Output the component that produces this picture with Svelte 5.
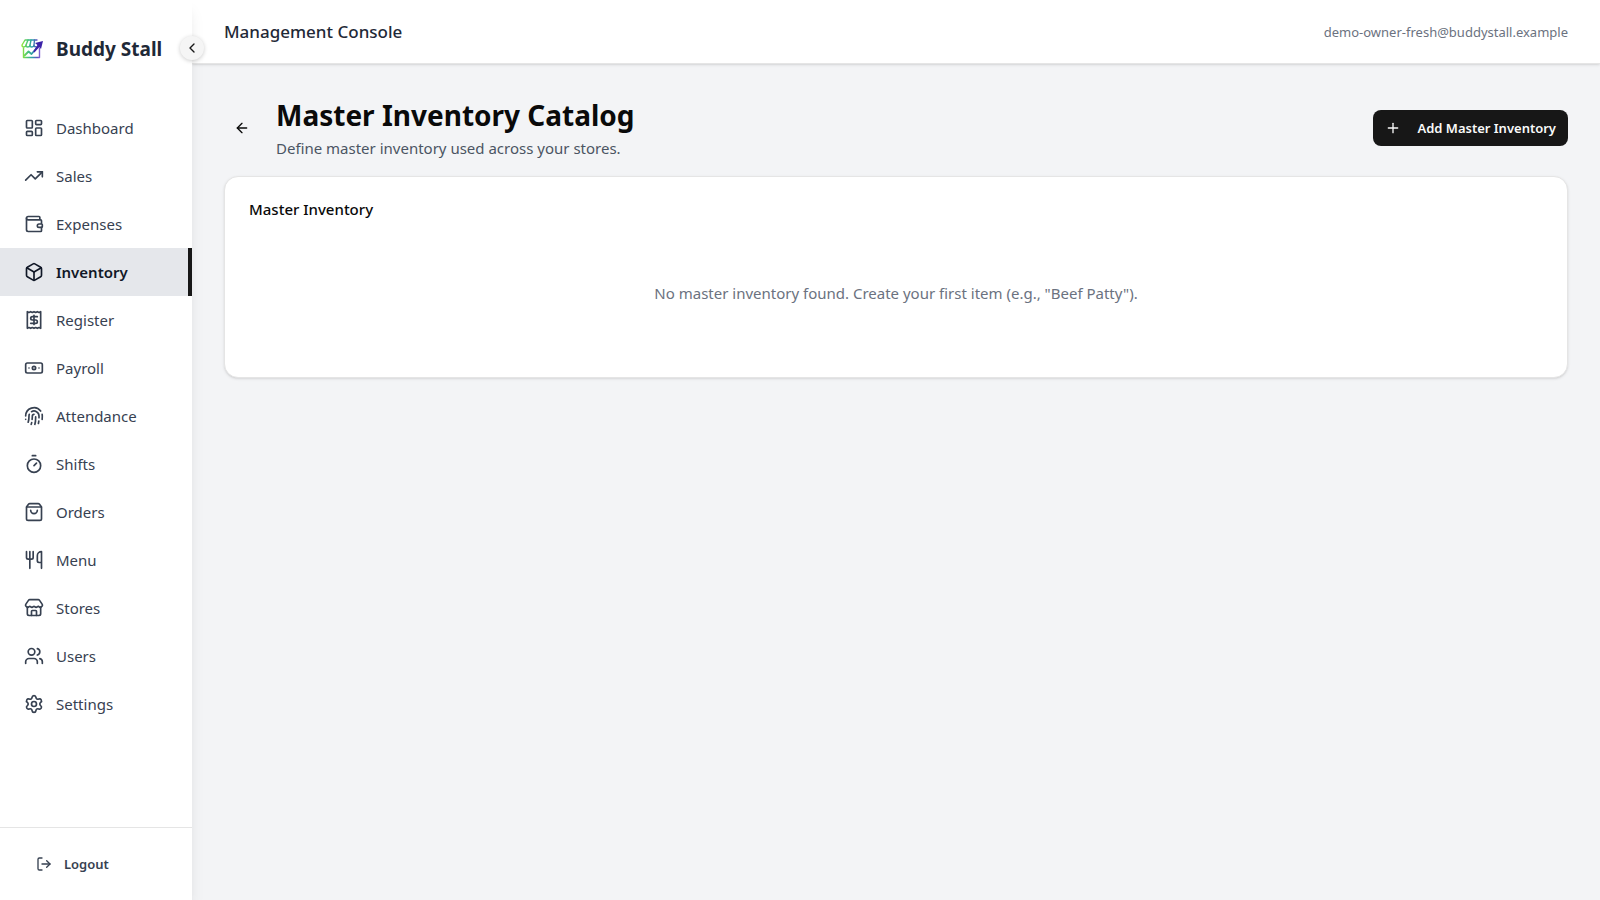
<script>
  const navItems = [
    {
      label: 'Dashboard',
      paths: [
        'M4 3h5a1 1 0 0 1 1 1v7a1 1 0 0 1-1 1H4a1 1 0 0 1-1-1V4a1 1 0 0 1 1-1z',
        'M15 3h5a1 1 0 0 1 1 1v3a1 1 0 0 1-1 1h-5a1 1 0 0 1-1-1V4a1 1 0 0 1 1-1z',
        'M15 12h5a1 1 0 0 1 1 1v7a1 1 0 0 1-1 1h-5a1 1 0 0 1-1-1v-7a1 1 0 0 1 1-1z',
        'M4 16h5a1 1 0 0 1 1 1v3a1 1 0 0 1-1 1H4a1 1 0 0 1-1-1v-3a1 1 0 0 1 1-1z'
      ]
    },
    { label: 'Sales', paths: ['M16 7h6v6', 'm22 7-8.5 8.5-5-5L2 17'] },
    {
      label: 'Expenses',
      paths: [
        'M19 7V4a1 1 0 0 0-1-1H5a2 2 0 0 0 0 4h15a1 1 0 0 1 1 1v4h-3a2 2 0 0 0 0 4h3a1 1 0 0 0 1-1v-2a1 1 0 0 0-1-1',
        'M3 5v14a2 2 0 0 0 2 2h15a1 1 0 0 0 1-1v-4'
      ]
    },
    {
      label: 'Inventory',
      paths: [
        'M21 8a2 2 0 0 0-1-1.73l-7-4a2 2 0 0 0-2 0l-7 4A2 2 0 0 0 3 8v8a2 2 0 0 0 1 1.73l7 4a2 2 0 0 0 2 0l7-4A2 2 0 0 0 21 16Z',
        'm3.3 7 8.7 5 8.7-5',
        'M12 22V12'
      ]
    },
    {
      label: 'Register',
      paths: [
        'M4 2v20l2-1 2 1 2-1 2 1 2-1 2 1 2-1 2 1V2l-2 1-2-1-2 1-2-1-2 1-2-1-2 1Z',
        'M16 8h-6a2 2 0 1 0 0 4h4a2 2 0 1 1 0 4H8',
        'M12 17.5v-11'
      ]
    },
    {
      label: 'Payroll',
      paths: [
        'M4 6h16a2 2 0 0 1 2 2v8a2 2 0 0 1-2 2H4a2 2 0 0 1-2-2V8a2 2 0 0 1 2-2z',
        'M14 12a2 2 0 1 1-4 0 2 2 0 0 1 4 0z',
        'M6 12h.01M18 12h.01'
      ]
    },
    {
      label: 'Attendance',
      paths: [
        'M12 10a2 2 0 0 0-2 2c0 1.02-.1 2.51-.26 4',
        'M14 13.12c0 2.38 0 6.38-1 8.88',
        'M17.29 21.02c.12-.6.43-2.3.5-3.02',
        'M2 12a10 10 0 0 1 18-6',
        'M2 16h.01',
        'M21.8 16c.2-2 .131-5.354 0-6',
        'M5 19.5C5.5 18 6 15 6 12a6 6 0 0 1 .34-2',
        'M8.65 22c.21-.66.45-1.32.57-2',
        'M9 6.8a6 6 0 0 1 9 5.2v2'
      ]
    },
    { label: 'Shifts', paths: ['M10 2h4', 'm12 14 3-3', 'M20 14a8 8 0 1 1-16 0 8 8 0 0 1 16 0z'] },
    {
      label: 'Orders',
      paths: [
        'M16 10a4 4 0 0 1-8 0',
        'M3.103 6.034h17.794',
        'M3.4 5.467a2 2 0 0 0-.4 1.2V20a2 2 0 0 0 2 2h14a2 2 0 0 0 2-2V6.667a2 2 0 0 0-.4-1.2l-2-2.667A2 2 0 0 0 17 2H7a2 2 0 0 0-1.6.8z'
      ]
    },
    {
      label: 'Menu',
      paths: [
        'M3 2v7c0 1.1.9 2 2 2h4a2 2 0 0 0 2-2V2',
        'M7 2v20',
        'M21 15V2a5 5 0 0 0-5 5v6c0 1.1.9 2 2 2h3Zm0 0v7'
      ]
    },
    {
      label: 'Stores',
      paths: [
        'M15 21v-5a1 1 0 0 0-1-1h-4a1 1 0 0 0-1 1v5',
        'M17.774 10.31a1.12 1.12 0 0 0-1.549 0 2.5 2.5 0 0 1-3.451 0 1.12 1.12 0 0 0-1.548 0 2.5 2.5 0 0 1-3.452 0 1.12 1.12 0 0 0-1.549 0 2.5 2.5 0 0 1-3.77-3.248l2.889-4.184A2 2 0 0 1 7 2h10a2 2 0 0 1 1.653.873l2.895 4.192a2.5 2.5 0 0 1-3.774 3.244',
        'M4 10.95V19a2 2 0 0 0 2 2h12a2 2 0 0 0 2-2v-8.05'
      ]
    },
    {
      label: 'Users',
      paths: [
        'M16 21v-2a4 4 0 0 0-4-4H6a4 4 0 0 0-4 4v2',
        'M16 3.128a4 4 0 0 1 0 7.744',
        'M22 21v-2a4 4 0 0 0-3-3.87',
        'M13 7a4 4 0 1 1-8 0 4 4 0 0 1 8 0z'
      ]
    },
    {
      label: 'Settings',
      paths: [
        'M9.671 4.136a2.34 2.34 0 0 1 4.659 0 2.34 2.34 0 0 0 3.319 1.915 2.34 2.34 0 0 1 2.33 4.033 2.34 2.34 0 0 0 0 3.831 2.34 2.34 0 0 1-2.33 4.033 2.34 2.34 0 0 0-3.319 1.915 2.34 2.34 0 0 1-4.659 0 2.34 2.34 0 0 0-3.32-1.915 2.34 2.34 0 0 1-2.33-4.033 2.34 2.34 0 0 0 0-3.831A2.34 2.34 0 0 1 6.35 6.051a2.34 2.34 0 0 0 3.319-1.915',
        'M15 12a3 3 0 1 1-6 0 3 3 0 0 1 6 0z'
      ]
    }
  ];

  let active = $state('Inventory');
  let collapsed = $state(false);

  function select(event, label) {
    event.preventDefault();
    active = label;
  }
</script>

{#snippet icon(paths, size)}
  <svg class="icon" width={size} height={size} viewBox="0 0 24 24" aria-hidden="true">
    {#each paths as d}
      <path {d} />
    {/each}
  </svg>
{/snippet}

<div class="layout">
  <aside class="sidebar" class:collapsed>
    <div class="brand">
      <svg class="logo" width="24" height="24" viewBox="0 0 24 24" aria-hidden="true">
        <defs>
          <linearGradient id="brand-gradient" x1="2" y1="0" x2="22" y2="0" gradientUnits="userSpaceOnUse">
            <stop offset="0" stop-color="#8fe63a" />
            <stop offset="0.25" stop-color="#4fc870" />
            <stop offset="0.5" stop-color="#2b9fa8" />
            <stop offset="0.75" stop-color="#5b4fc0" />
            <stop offset="1" stop-color="#9a6be0" />
          </linearGradient>
        </defs>
        <g
          fill="none"
          stroke="url(#brand-gradient)"
          stroke-width="1.4"
          stroke-linejoin="round"
          stroke-linecap="round"
        >
          <path d="M17 3H5L2 8c0 2.600 3.400 2.600 4 .2 0 2.400 3.700 2.400 4 0 0 2.400 3.700 2.400 4 0 .3 1.600 1.200 1.800 2 1.500" />
          <path d="M8 3 6 8M11 3l-1 5M14.500 3 14 8" />
          <path d="M3.500 11v9.500h16V11" />
          <path d="m4.500 18.500 4-4 3 2.500 6-7" stroke-width="1.800" />
        </g>
        <path d="m15 6 8-2-2 8-1.600-2-5 5.400-1-1L17.400 8z" fill="#3b22a8" />
      </svg>
      {#if !collapsed}<span>Buddy Stall</span>{/if}
    </div>

    <button
      class="toggle"
      aria-label={collapsed ? 'Expand sidebar' : 'Collapse sidebar'}
      onclick={() => (collapsed = !collapsed)}
    >
      {@render icon([collapsed ? 'm9 18 6-6-6-6' : 'm15 18-6-6 6-6'], 16)}
    </button>

    <nav>
      {#each navItems as item}
        <a
          href="#{item.label.toLowerCase()}"
          class="nav-item"
          class:active={active === item.label}
          onclick={(event) => select(event, item.label)}
        >
          {@render icon(item.paths, 20)}
          {#if !collapsed}<span>{item.label}</span>{/if}
        </a>
      {/each}
    </nav>

    <div class="sidebar-footer">
      <button class="logout">
        {@render icon(['m16 17 5-5-5-5', 'M21 12H9', 'M9 21H5a2 2 0 0 1-2-2V5a2 2 0 0 1 2-2h4'], 16)}
        {#if !collapsed}<span>Logout</span>{/if}
      </button>
    </div>
  </aside>

  <div class="content">
    <header class="topbar">
      <h2>Management Console</h2>
      <span class="email">demo-owner-fresh@buddystall.example</span>
    </header>

    <main>
      <div class="page-header">
        <button class="back" aria-label="Back">
          {@render icon(['m12 19-7-7 7-7', 'M19 12H5'], 16)}
        </button>
        <div class="page-title">
          <h1>Master Inventory Catalog</h1>
          <p>Define master inventory used across your stores.</p>
        </div>
        <button class="add">
          {@render icon(['M5 12h14', 'M12 5v14'], 16)}
          <span>Add Master Inventory</span>
        </button>
      </div>

      <section class="card">
        <h3>Master Inventory</h3>
        <p class="empty">No master inventory found. Create your first item (e.g., "Beef Patty").</p>
      </section>
    </main>
  </div>
</div>

<style>
  :global(body) {
    margin: 0;
    background: #f3f4f6;
  }

  .layout {
    display: flex;
    min-height: 100vh;
    font-family: 'Segoe UI', 'Noto Sans', 'Open Sans', sans-serif;
    font-size: 15px;
    line-height: 24px;
    color: #0a0a0a;
  }

  h1,
  h2,
  h3,
  p {
    margin: 0;
  }

  button {
    font: inherit;
    color: inherit;
    border: none;
    background: none;
    cursor: pointer;
  }

  .icon {
    flex-shrink: 0;
    fill: none;
    stroke: currentColor;
    stroke-width: 2;
    stroke-linecap: round;
    stroke-linejoin: round;
  }

  /* sidebar */
  .sidebar {
    position: sticky;
    top: 0;
    z-index: 10;
    display: flex;
    flex-direction: column;
    flex-shrink: 0;
    width: 192px;
    height: 100vh;
    background: #fff;
    box-shadow: 0 10px 15px -3px rgba(0, 0, 0, 0.1), 0 4px 6px -4px rgba(0, 0, 0, 0.1);
  }

  .sidebar.collapsed {
    width: 68px;
  }

  .brand {
    display: flex;
    align-items: center;
    gap: 12px;
    height: 98px;
    padding: 0 20px;
    font-size: 19px;
    font-weight: 700;
    color: #1f2937;
    white-space: nowrap;
  }

  .logo {
    flex-shrink: 0;
  }

  .toggle {
    position: absolute;
    top: 36px;
    right: -12px;
    display: flex;
    align-items: center;
    justify-content: center;
    width: 24px;
    height: 24px;
    padding: 0;
    border-radius: 50%;
    background: #f5f5f5;
    color: #171717;
    box-shadow: 0 1px 4px rgba(0, 0, 0, 0.2);
  }

  nav {
    flex: 1;
    padding-top: 6px;
    overflow-y: auto;
  }

  .nav-item {
    display: flex;
    align-items: center;
    gap: 12px;
    height: 48px;
    padding: 0 20px 0 24px;
    box-sizing: border-box;
    color: #374151;
    text-decoration: none;
  }

  .nav-item:hover {
    background: #f3f4f6;
  }

  .nav-item.active {
    background: #e5e7eb;
    border-right: 4px solid #171717;
    color: #111827;
    font-weight: 600;
  }

  .sidebar-footer {
    padding: 16px 24px;
    border-top: 1px solid #e5e5e5;
  }

  .logout {
    display: flex;
    align-items: center;
    gap: 12px;
    height: 40px;
    padding: 0 12px;
    font-size: 13px;
    font-weight: 600;
    color: #374151;
  }

  /* main area */
  .content {
    flex: 1;
    min-width: 0;
  }

  .topbar {
    display: flex;
    align-items: center;
    justify-content: space-between;
    height: 64px;
    padding: 0 32px;
    box-sizing: border-box;
    border-bottom: 1px solid #e5e5e5;
    background: #fff;
    box-shadow: 0 1px 3px rgba(0, 0, 0, 0.1), 0 1px 2px -1px rgba(0, 0, 0, 0.1);
  }

  .topbar h2 {
    font-size: 17px;
    font-weight: 500;
    color: #1f2937;
  }

  .email {
    font-size: 13px;
    color: #6b7280;
  }

  main {
    padding: 32px;
  }

  .page-header {
    display: flex;
    align-items: center;
    gap: 16px;
    margin-bottom: 16px;
  }

  .back {
    display: flex;
    align-items: center;
    justify-content: center;
    width: 36px;
    height: 36px;
    padding: 0;
    border-radius: 8px;
  }

  .page-title {
    flex: 1;
  }

  .page-title h1 {
    margin-bottom: 2px;
    font-size: 28px;
    line-height: 38px;
    font-weight: 700;
  }

  .page-title p {
    color: #4b5563;
  }

  .add {
    display: flex;
    align-items: center;
    gap: 16px;
    height: 36px;
    padding: 0 12px;
    border-radius: 8px;
    background: #171717;
    color: #fafafa;
    font-size: 13px;
    font-weight: 600;
    white-space: nowrap;
  }

  .card {
    padding: 20px 24px 72px;
    border: 1px solid #e5e5e5;
    border-radius: 14px;
    background: #fff;
    box-shadow: 0 1px 3px rgba(0, 0, 0, 0.1), 0 1px 2px -1px rgba(0, 0, 0, 0.1);
  }

  .card h3 {
    font-size: 15px;
    font-weight: 500;
  }

  .empty {
    margin-top: 60px;
    text-align: center;
    color: #6b7280;
  }
</style>
